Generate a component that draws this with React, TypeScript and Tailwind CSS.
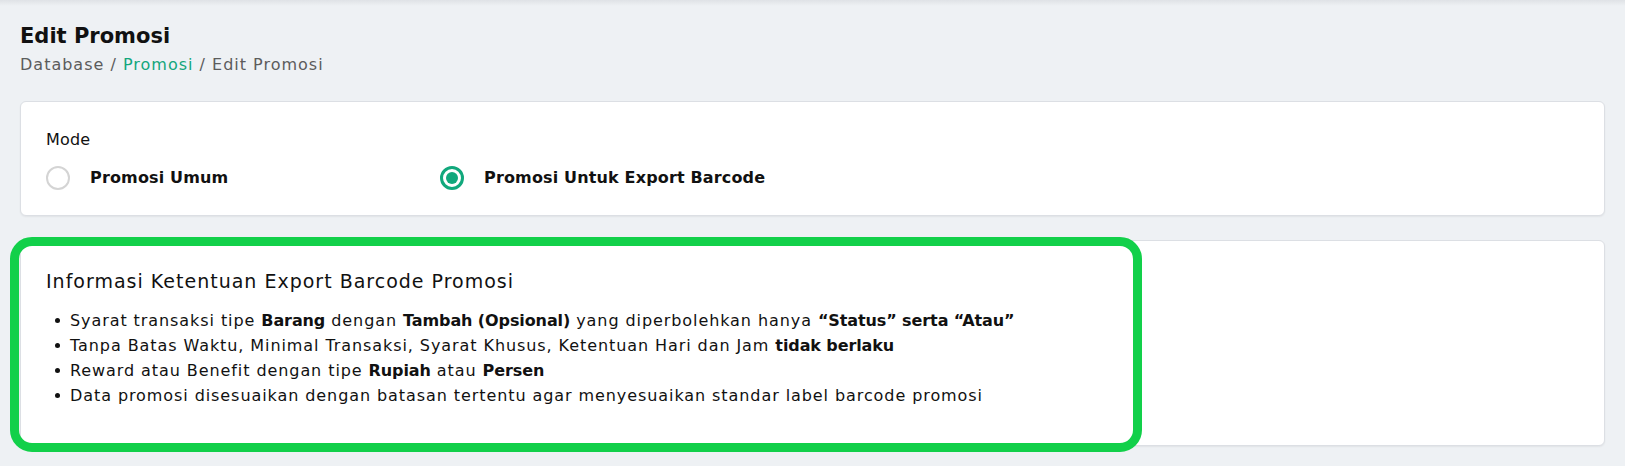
import type { ReactNode } from 'react';

const FONT = "font-['DejaVu_Sans',sans-serif]";

function Radio({ checked, label }: { checked?: boolean; label: string }) {
  return (
    <label className="flex items-center gap-5 cursor-pointer">
      {checked ? (
        <span className="w-6 h-6 rounded-full border-[3px] border-[#11a87c] flex items-center justify-center">
          <span className="w-[12px] h-[12px] rounded-full bg-[#11a87c]" />
        </span>
      ) : (
        <span className="w-6 h-6 rounded-full border-2 border-[#d4d4d4] bg-white" />
      )}
      <span className="text-[16px] font-semibold tracking-[0.15px] text-[#111]">{label}</span>
    </label>
  );
}

function Item({ children }: { children: ReactNode }) {
  return (
    <li className="flex items-start leading-[25px]">
      <span className="w-4 shrink-0 flex justify-start pl-[1px] pt-[10px]">
        <span className="w-[5px] h-[5px] rounded-full bg-[#111]" />
      </span>
      <span>{children}</span>
    </li>
  );
}

function B({ children }: { children: ReactNode }) {
  return <b className="font-bold tracking-[-0.1px]">{children}</b>;
}

export default function App() {
  return (
    <div className={`${FONT} min-h-screen bg-[#eef1f4] text-[#111] relative`}>
      <div className="absolute inset-x-0 top-0 h-[6px] bg-gradient-to-b from-[#dfe2e6] to-transparent" />
      <div className="px-5 pt-[22px] pb-5">
        <h1 className="text-[21px] leading-[28px] font-semibold text-[#111]">Edit Promosi</h1>
        <div className="text-[16px] leading-[24px] tracking-[1px] text-[#5c5c5c] mt-[3px]">
          Database / <span className="text-[#13a67c]">Promosi</span> / Edit Promosi
        </div>

        <div className="mt-[24px] bg-white border border-[#dcdfe4] rounded-md shadow-[0_1px_2px_rgba(0,0,0,0.06)] px-[25px] pt-[26px] pb-[25px]">
          <div className="text-[16px] leading-[24px] tracking-[0.2px]">Mode</div>
          <div className="flex items-center mt-[14px]">
            <div className="w-[394px]">
              <Radio label="Promosi Umum" />
            </div>
            <Radio checked label="Promosi Untuk Export Barcode" />
          </div>
        </div>

        <div className="relative mt-[24px] bg-white border border-[#dcdfe4] rounded-md shadow-[0_1px_2px_rgba(0,0,0,0.06)] h-[206px] px-[25px] pt-[28px]">
          <div className="absolute left-[-11px] top-[-4px] w-[1132px] h-[215px] border-[9px] border-[#12d04a] rounded-[22px] pointer-events-none" />
          <h2 className="text-[19px] leading-[24px] tracking-[1px] font-medium text-[#111]">
            Informasi Ketentuan Export Barcode Promosi
          </h2>
          <ul className="mt-[15px] pl-[8px] text-[16px] tracking-[0.92px]">
            <Item>
              Syarat transaksi tipe <B>Barang</B> dengan <B>Tambah (Opsional)</B> yang diperbolehkan hanya{' '}
              <B>“Status” serta “Atau”</B>
            </Item>
            <Item>
              Tanpa Batas Waktu, Minimal Transaksi, Syarat Khusus, Ketentuan Hari dan Jam <B>tidak berlaku</B>
            </Item>
            <Item>
              Reward atau Benefit dengan tipe <B>Rupiah</B> atau <B>Persen</B>
            </Item>
            <Item>
              Data promosi disesuaikan dengan batasan tertentu agar menyesuaikan standar label barcode promosi
            </Item>
          </ul>
        </div>
      </div>
    </div>
  );
}
